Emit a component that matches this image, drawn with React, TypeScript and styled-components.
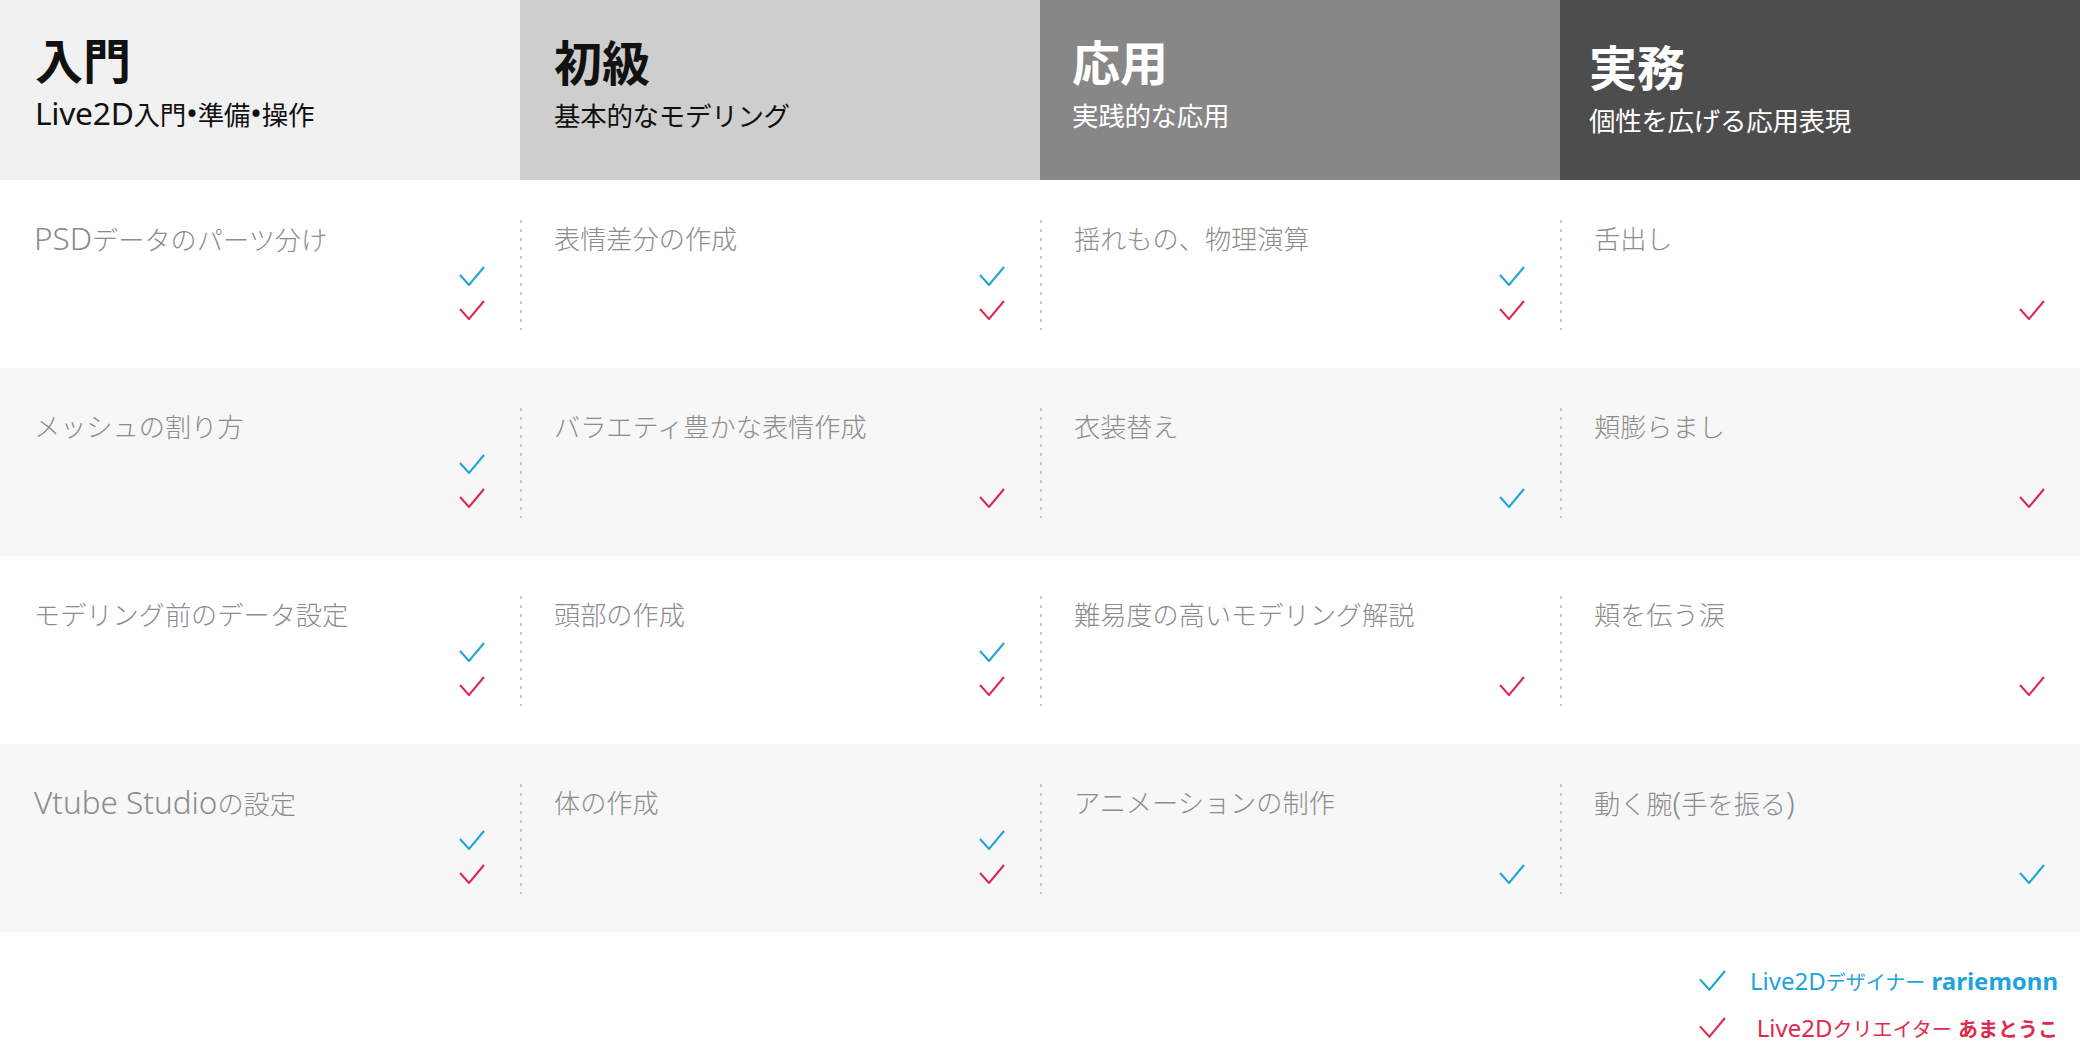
import React from 'react';
import styled, { createGlobalStyle } from 'styled-components';

const BLUE = '#1ea2d9';
const RED = '#d8284b';

type Mark = 'b' | 'm';

interface Level {
  title: string;
  sub: string;
  bg: string;
  light?: boolean;
  drop: number;
  inset: number;
}

const levels: Level[] = [
  { title: '入門', sub: 'Live2D入門•準備•操作', bg: '#f1f1f1', drop: 0, inset: 35 },
  { title: '初級', sub: '基本的なモデリング', bg: '#cecece', drop: 2, inset: 34 },
  { title: '応用', sub: '実践的な応用', bg: '#878787', light: true, drop: 2, inset: 32 },
  { title: '実務', sub: '個性を広げる応用表現', bg: '#4d4d4d', light: true, drop: 7, inset: 29 }
];

const rows: [string, Mark[]][][] = [
  [['PSDデータのパーツ分け', ['b', 'm']], ['表情差分の作成', ['b', 'm']], ['揺れもの、物理演算', ['b', 'm']], ['舌出し', ['m']]],
  [['メッシュの割り方', ['b', 'm']], ['バラエティ豊かな表情作成', ['m']], ['衣装替え', ['b']], ['頬膨らまし', ['m']]],
  [['モデリング前のデータ設定', ['b', 'm']], ['頭部の作成', ['b', 'm']], ['難易度の高いモデリング解説', ['m']], ['頬を伝う涙', ['m']]],
  [['Vtube Studioの設定', ['b', 'm']], ['体の作成', ['b', 'm']], ['アニメーションの制作', ['b']], ['動く腕(手を振る)', ['b']]]
];

const GlobalStyle = createGlobalStyle`
  html, body {
    margin: 0;
    padding: 0;
    background: #fff;
  }
  body {
    font-family: "Noto Sans CJK JP", "Noto Sans", sans-serif;
  }
`;

// latin runs are set a little larger so their caps line up with the kana
const Latin = styled.span`
  font-family: "Noto Sans", "Noto Sans CJK JP", sans-serif;
  font-size: 1.2em;
`;

const mixed = (text: string) =>
  text
    .split(/([\x20-\x7e•]+)/)
    .filter(Boolean)
    .map((part, i) => (/^[\x20-\x7e•]+$/.test(part) ? <Latin key={i}>{part}</Latin> : part));

const Page = styled.div`
  width: 2080px;
  height: 1044px;
  display: flex;
  flex-direction: column;
  overflow: hidden;
`;

const HeaderRow = styled.div`
  display: grid;
  grid-template-columns: repeat(4, 1fr);
  height: 180px;
`;

const HeaderCell = styled.div<{ $bg: string; $light?: boolean; $drop: number; $inset: number }>`
  background: ${(p) => p.$bg};
  color: ${(p) => (p.$light ? '#fff' : '#111')};
  padding: ${(p) => 29 + p.$drop}px 20px 0 ${(p) => p.$inset}px;
  display: flex;
  flex-direction: column;
`;

const Title = styled.div`
  font-size: 48px;
  font-weight: 700;
  line-height: 58px;
`;

const Subtitle = styled.div`
  font-size: 26.5px;
  font-weight: 400;
  line-height: 36px;
  margin-top: 8px;
  letter-spacing: -0.3px;
  white-space: nowrap;
`;

const BodyRow = styled.div<{ $shade: boolean }>`
  display: grid;
  grid-template-columns: repeat(4, 1fr);
  height: 188px;
  box-sizing: border-box;
  padding: 40px 0 38px;
  background: ${(p) => (p.$shade ? '#f7f7f7' : '#fff')};
`;

const Cell = styled.div<{ $divided: boolean }>`
  display: flex;
  flex-direction: column;
  padding: 0 35px 10px 34px;
  background-image: ${(p) =>
    p.$divided ? 'repeating-linear-gradient(to bottom, #c9c9c9 0 3px, transparent 3px 9px)' : 'none'};
  background-size: 2px 100%;
  background-repeat: no-repeat;
  background-position: 0 0;
`;

const Topic = styled.div`
  font-size: 26.2px;
  font-weight: 300;
  line-height: 36px;
  color: #8c8c8c;
  white-space: nowrap;
`;

const Marks = styled.div`
  margin-top: auto;
  display: flex;
  flex-direction: column;
  align-items: flex-end;
  gap: 14px;
`;

const Legend = styled.div`
  flex: 1;
  display: grid;
  grid-template-columns: auto auto;
  justify-content: end;
  align-content: start;
  column-gap: 24px;
  row-gap: 24px;
  padding: 38px 22px 0 0;
`;

const LegendText = styled.div<{ $color: string }>`
  justify-self: end;
  font-size: 20px;
  line-height: 22px;
  color: ${(p) => p.$color};
  white-space: pre;

  b {
    font-weight: 700;
  }
`;

const Check = ({ color, size = 26 }: { color: string; size?: number }) => (
  <svg width={size} height={(size * 20) / 26} viewBox="0 0 26 20" fill="none">
    <path d="M1 9 L10 19 L25 1" stroke={color} strokeWidth={2} strokeLinejoin="miter" />
  </svg>
);

export default function App(): React.ReactElement {
  return (
    <Page>
      <GlobalStyle />
      <HeaderRow>
        {levels.map((l) => (
          <HeaderCell key={l.title} $bg={l.bg} $light={l.light} $drop={l.drop} $inset={l.inset}>
            <Title>{l.title}</Title>
            <Subtitle>{mixed(l.sub)}</Subtitle>
          </HeaderCell>
        ))}
      </HeaderRow>
      {rows.map((row, i) => (
        <BodyRow key={i} $shade={i % 2 === 1}>
          {row.map(([topic, marks], j) => (
            <Cell key={topic} $divided={j > 0}>
              <Topic>{mixed(topic)}</Topic>
              <Marks>
                {marks.map((m) => (
                  <Check key={m} color={m === 'b' ? BLUE : RED} />
                ))}
              </Marks>
            </Cell>
          ))}
        </BodyRow>
      ))}
      <Legend>
        <Check color={BLUE} size={27} />
        <LegendText $color="#1fa3dd">
          {mixed('Live2Dデザイナー ')}
          <b>{mixed('rariemonn')}</b>
        </LegendText>
        <Check color="#e02a4c" size={27} />
        <LegendText $color="#e02a4c">
          {mixed('Live2Dクリエイター ')}
          <b>あまとうこ</b>
        </LegendText>
      </Legend>
    </Page>
  );
}
